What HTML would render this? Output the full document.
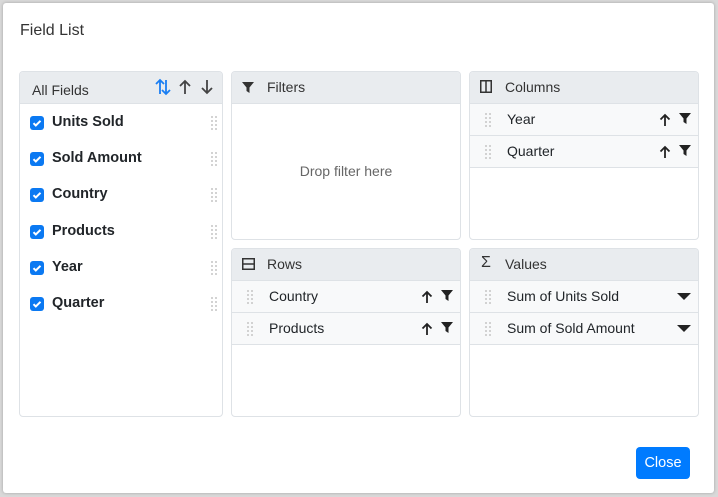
<!DOCTYPE html>
<html><head><style>
*{box-sizing:border-box;margin:0;padding:0}
body{width:718px;height:497px;background:#d9d9d9;font-family:"Liberation Sans",Arial,sans-serif;position:relative;overflow:hidden;color:#212529}
.dlg{position:absolute;left:3px;top:3px;width:711px;height:490px;background:#fff;border-radius:3px;box-shadow:0 0 3px rgba(0,0,0,.25)}
.title{position:absolute;left:17px;top:19px;font-size:16px;color:#333}
.p{position:absolute;border:1px solid #dee2e6;border-radius:4px;background:#fff;overflow:hidden}
.h{height:32px;background:#e9ecef;border-bottom:1px solid #dee2e6;position:relative;font-size:14px;color:#333}
.h span{position:absolute;top:7px}
.it{height:32px;background:#f8f9fa;border-bottom:1px solid #dee2e6;position:relative;font-size:14px;color:#212529}
.it .t{position:absolute;left:37px;top:7px}
.dr{position:absolute;left:14px;top:8px;width:8px;height:16px;background-image:radial-gradient(circle,#c8c8c8 0.9px,transparent 1.1px);background-size:4px 4px}
.ic{position:absolute;top:9px}
.f{position:absolute;height:20px;font-size:14.5px;font-weight:bold;left:0;width:100%}
.cb{position:absolute;left:10px;top:3px;width:14px;height:14px;background:#0b79f2;border-radius:3px}
.f .t{position:absolute;left:32px;top:1px}
.f .dr{left:190px;top:2px}
</style></head><body>
<div class="dlg">
<div class="title">Field List</div>
</div>
<div class="p" style="left:19px;top:71px;width:204px;height:346px">
 <div class="h"><span style="left:12px;top:10px">All Fields</span>
  <svg class="ic" style="left:134px;top:6px" width="18" height="18" viewBox="0 0 18 18" fill="none" stroke="#1a7ef2" stroke-width="1.8"><path d="M6 16V2M2 6l4-4 4 4M12 2v14M8 12l4 4 4-4"/></svg>
  <svg class="ic" style="left:158px;top:7px" width="14" height="16" viewBox="0 0 14 16" fill="none" stroke="#444" stroke-width="1.8"><path d="M7 15V2M2 7l5-5 5 5"/></svg>
  <svg class="ic" style="left:180px;top:7px" width="14" height="16" viewBox="0 0 14 16" fill="none" stroke="#444" stroke-width="1.8"><path d="M7 1v13M2 9l5 5 5-5"/></svg>
 </div>
 <div class="f" style="top:41px"><div class="cb"><svg width="14" height="14" viewBox="0 0 14 14"><path d="M3.5 7.2l2.3 2.3 4.7-4.7" stroke="#fff" stroke-width="2" fill="none"/></svg></div><span class="t">Units Sold</span><div class="dr"></div></div>
 <div class="f" style="top:77px"><div class="cb"><svg width="14" height="14" viewBox="0 0 14 14"><path d="M3.5 7.2l2.3 2.3 4.7-4.7" stroke="#fff" stroke-width="2" fill="none"/></svg></div><span class="t">Sold Amount</span><div class="dr"></div></div>
 <div class="f" style="top:113px"><div class="cb"><svg width="14" height="14" viewBox="0 0 14 14"><path d="M3.5 7.2l2.3 2.3 4.7-4.7" stroke="#fff" stroke-width="2" fill="none"/></svg></div><span class="t">Country</span><div class="dr"></div></div>
 <div class="f" style="top:150px"><div class="cb"><svg width="14" height="14" viewBox="0 0 14 14"><path d="M3.5 7.2l2.3 2.3 4.7-4.7" stroke="#fff" stroke-width="2" fill="none"/></svg></div><span class="t">Products</span><div class="dr"></div></div>
 <div class="f" style="top:186px"><div class="cb"><svg width="14" height="14" viewBox="0 0 14 14"><path d="M3.5 7.2l2.3 2.3 4.7-4.7" stroke="#fff" stroke-width="2" fill="none"/></svg></div><span class="t">Year</span><div class="dr"></div></div>
 <div class="f" style="top:222px"><div class="cb"><svg width="14" height="14" viewBox="0 0 14 14"><path d="M3.5 7.2l2.3 2.3 4.7-4.7" stroke="#fff" stroke-width="2" fill="none"/></svg></div><span class="t">Quarter</span><div class="dr"></div></div>
</div>

<div class="p" style="left:231px;top:71px;width:230px;height:169px">
 <div class="h"><svg class="ic" style="left:10px;top:10px" width="12" height="12" viewBox="0 0 12 12"><path d="M0 0h12L7.5 5.5V11L4.5 9V5.5z" fill="#333"/></svg><span style="left:35px">Filters</span></div>
 <div style="position:absolute;top:91px;width:100%;text-align:center;font-size:14px;color:#666">Drop filter here</div>
</div>

<div class="p" style="left:469px;top:71px;width:230px;height:169px">
 <div class="h"><svg class="ic" style="left:10px;top:8px" width="12" height="13" viewBox="0 0 12 13" fill="none" stroke="#333" stroke-width="1.5"><rect x="0.75" y="0.75" width="10.5" height="11.5"/><path d="M6 1v11"/></svg><span style="left:35px">Columns</span></div>
 <div class="it"><div class="dr"></div><span class="t">Year</span>
  <svg class="ic" style="left:189px;top:9px" width="12" height="14" viewBox="0 0 12 14" fill="none" stroke="#222" stroke-width="1.8"><path d="M6 13V2M1.5 6.5L6 2l4.5 4.5"/></svg>
  <svg class="ic" style="left:209px;top:9px" width="12" height="12" viewBox="0 0 12 12"><path d="M0 0h12L7.5 5.5V11L4.5 9V5.5z" fill="#222"/></svg></div>
 <div class="it"><div class="dr"></div><span class="t">Quarter</span>
  <svg class="ic" style="left:189px;top:9px" width="12" height="14" viewBox="0 0 12 14" fill="none" stroke="#222" stroke-width="1.8"><path d="M6 13V2M1.5 6.5L6 2l4.5 4.5"/></svg>
  <svg class="ic" style="left:209px;top:9px" width="12" height="12" viewBox="0 0 12 12"><path d="M0 0h12L7.5 5.5V11L4.5 9V5.5z" fill="#222"/></svg></div>
</div>

<div class="p" style="left:231px;top:248px;width:230px;height:169px">
 <div class="h"><svg class="ic" style="left:10px;top:9px" width="13" height="12" viewBox="0 0 13 12" fill="none" stroke="#333" stroke-width="1.5"><rect x="0.75" y="0.75" width="11.5" height="10.5"/><path d="M1 6h11"/></svg><span style="left:35px">Rows</span></div>
 <div class="it"><div class="dr"></div><span class="t">Country</span>
  <svg class="ic" style="left:189px;top:9px" width="12" height="14" viewBox="0 0 12 14" fill="none" stroke="#222" stroke-width="1.8"><path d="M6 13V2M1.5 6.5L6 2l4.5 4.5"/></svg>
  <svg class="ic" style="left:209px;top:9px" width="12" height="12" viewBox="0 0 12 12"><path d="M0 0h12L7.5 5.5V11L4.5 9V5.5z" fill="#222"/></svg></div>
 <div class="it"><div class="dr"></div><span class="t">Products</span>
  <svg class="ic" style="left:189px;top:9px" width="12" height="14" viewBox="0 0 12 14" fill="none" stroke="#222" stroke-width="1.8"><path d="M6 13V2M1.5 6.5L6 2l4.5 4.5"/></svg>
  <svg class="ic" style="left:209px;top:9px" width="12" height="12" viewBox="0 0 12 12"><path d="M0 0h12L7.5 5.5V11L4.5 9V5.5z" fill="#222"/></svg></div>
</div>

<div class="p" style="left:469px;top:248px;width:230px;height:169px">
 <div class="h"><span style="left:11px;top:5px;font-size:16px">Σ</span><span style="left:35px">Values</span></div>
 <div class="it"><div class="dr"></div><span class="t">Sum of Units Sold</span>
  <svg class="ic" style="left:207px;top:12px" width="14" height="7" viewBox="0 0 14 7"><path d="M0 0h14L7 7z" fill="#222"/></svg></div>
 <div class="it"><div class="dr"></div><span class="t">Sum of Sold Amount</span>
  <svg class="ic" style="left:207px;top:12px" width="14" height="7" viewBox="0 0 14 7"><path d="M0 0h14L7 7z" fill="#222"/></svg></div>
</div>

<div style="position:absolute;left:636px;top:447px;width:54px;height:32px;background:#007bff;border-radius:4px;color:#fff;font-size:14.5px;text-align:center;line-height:32px">Close</div>
</body></html>
